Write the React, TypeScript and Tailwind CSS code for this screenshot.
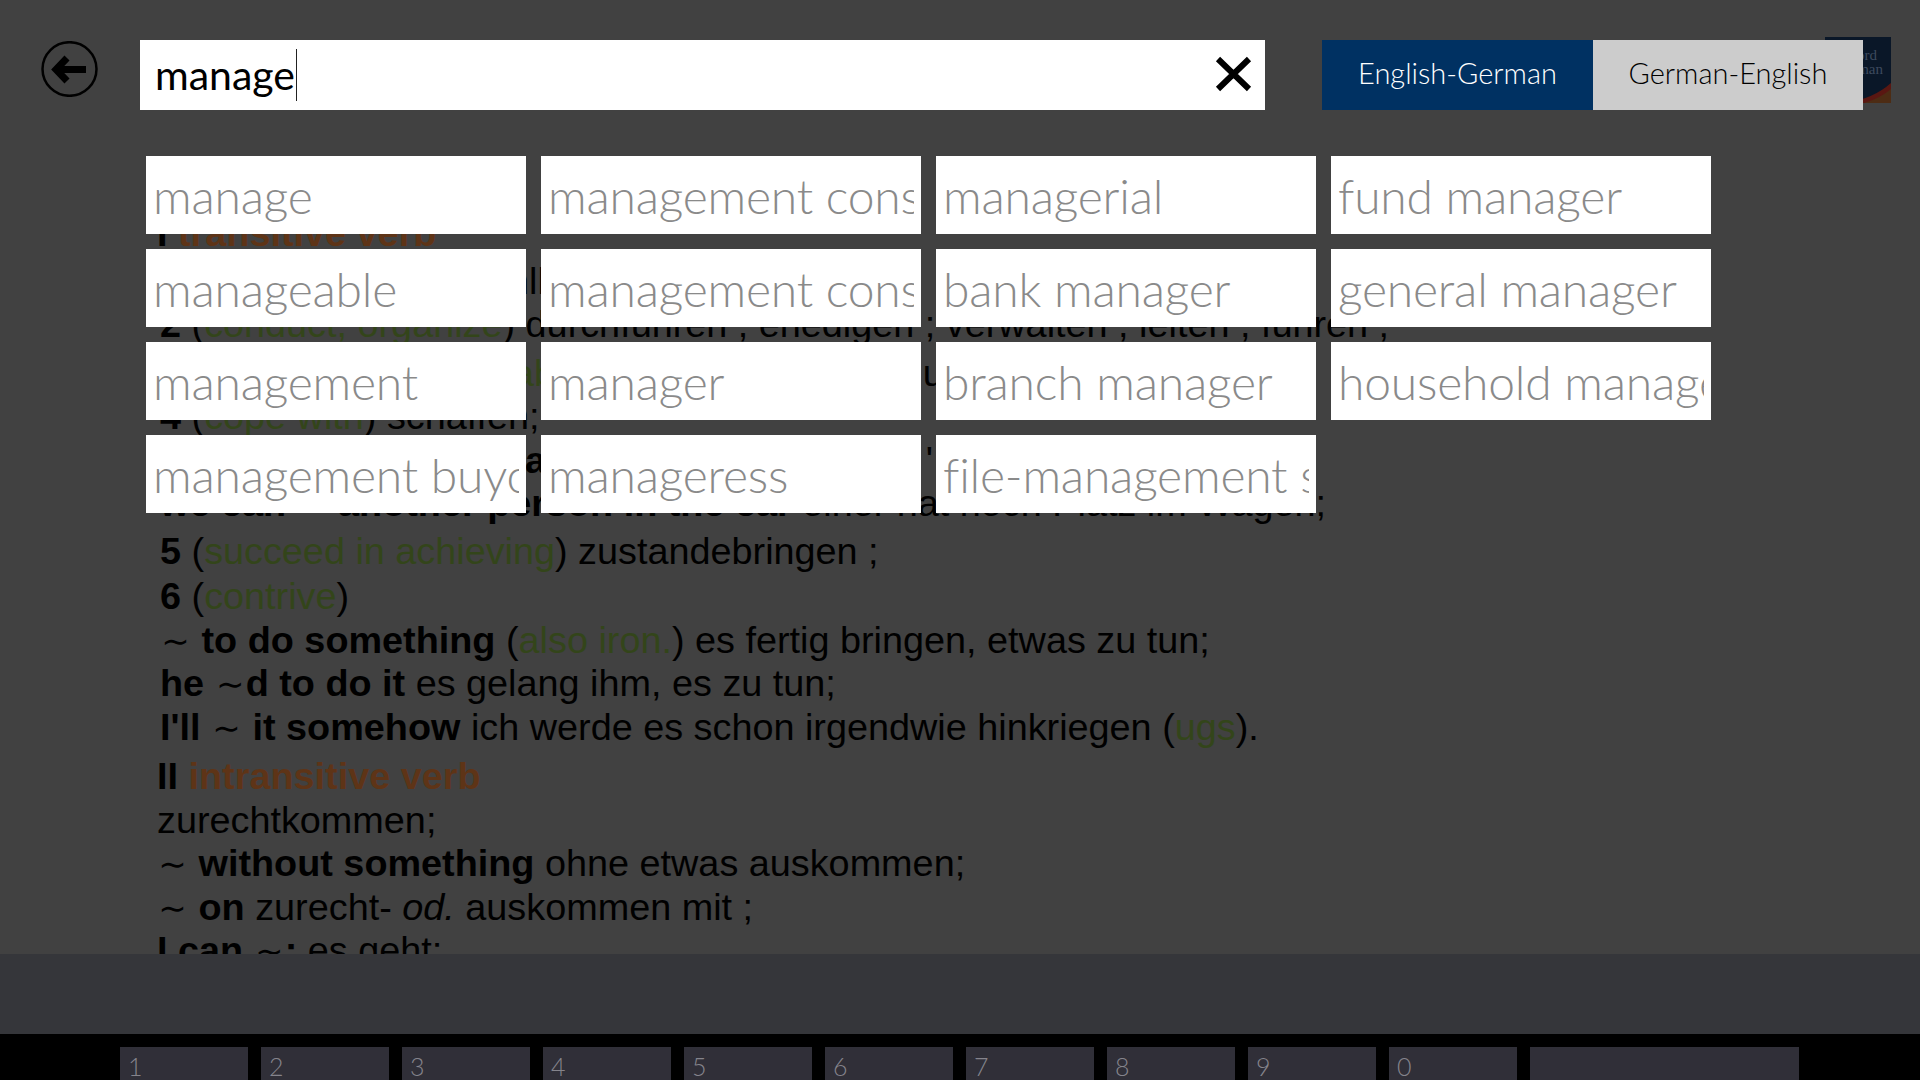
import React from "react";

const cells = [
  ["manage", "management consultant", "managerial", "fund manager"],
  ["manageable", "management consultancy", "bank manager", "general manager"],
  ["management", "manager", "branch manager", "household manager"],
  ["management buyout", "manageress", "file-management system"],
];
const keys = ["1", "2", "3", "4", "5", "6", "7", "8", "9", "0"];

const G = ({ children }: { children: React.ReactNode }) => <span className="text-[#33451a]">{children}</span>;
const B = ({ children }: { children: React.ReactNode }) => <b className="font-bold">{children}</b>;
const T = () => <span className="inline-block w-[31px] text-center font-['DejaVu_Sans',sans-serif] font-normal text-[34px] leading-none">∼</span>;

function Cell({ text }: { text: string }) {
  return (
    <div className="h-[78px] w-[380px] bg-white px-[7px] overflow-hidden">
      <div className="overflow-hidden whitespace-nowrap font-['Lato',sans-serif] font-light text-[48px] tracking-[-0.2px] [font-variant-ligatures:none] leading-[80px] text-[#8a8a8a]">
        {text}
      </div>
    </div>
  );
}

export default function App() {
  return (
    <div className="relative flex h-screen w-full flex-col overflow-hidden bg-[#414141]">
      <main className="h-[954px] overflow-hidden pl-[160px] pt-[212px] font-['Liberation_Sans',sans-serif] text-[37.8px] leading-[43.5px] text-black whitespace-nowrap">
        <div className="-ml-[3px] mb-[4px]"><B>I</B> <b className="font-bold text-[#5e3417]">transitive verb</b></div>
        <div>1 (<G>handle</G>) mit zu Wohlhaben;</div>
        <div><B>2</B> (<G>conduct, organize</G>) durchführen , erledigen ; verwalten , leiten , führen ;</div>
        <div className="mt-[5px]"><B>3</B> (<G>subject to manageable</G>) behaupten und an umgehen</div>
        <div><B>4</B> (<G>cope with</G>) schaffen;</div>
        <div><B>she thinks we can<T /> a</B> es nun noch schaffen '</div>
        <div><B>we can <T /> another person in the car</B> einer hat noch Platz im Wagen;</div>
        <div className="mt-[4px]"><B>5</B> (<G>succeed in achieving</G>) zustandebringen ;</div>
        <div className="mt-[2px]"><B>6</B> (<G>contrive</G>)</div>
        <div><T /> <B>to do something</B> (<G>also iron.</G>) es fertig bringen, etwas zu tun;</div>
        <div><B>he <T />d to do it</B> es gelang ihm, es zu tun;</div>
        <div><B>I'll <T /> it somehow</B> ich werde es schon irgendwie hinkriegen (<G>ugs</G>).</div>
        <div className="-ml-[3px] mt-[6px]"><B>II</B> <b className="font-bold text-[#5e3417]">intransitive verb</b></div>
        <div className="-ml-[3px]">zurechtkommen;</div>
        <div className="-ml-[3px]"><T /> <B>without something</B> ohne etwas auskommen;</div>
        <div className="-ml-[3px]"><T /> <B>on</B> zurecht- <i>od.</i> auskommen mit ;</div>
        <div className="-ml-[3px]"><B>I can <T />:</B> es geht;</div>
      </main>

      <div className="h-[80px] bg-[#35363a]" />

      <div className="flex h-[46px] gap-[13px] bg-black pl-[120px] pt-[13px]">
        {keys.map((k) => (
          <div key={k} className="h-[33px] w-[128px] overflow-hidden bg-[#302f38] pl-[8px] font-['Lato',sans-serif] text-[25px] font-light leading-[38px] text-[#85848c]">
            {k}
          </div>
        ))}
        <div className="h-[33px] w-[269px] bg-[#302f38]" />
      </div>

      <div className="absolute inset-x-0 top-0">
        <div className="relative flex pl-[41px] pt-[40px]">
          <svg className="mt-[1px] h-[56px] w-[57px] shrink-0" viewBox="0 0 57 56" fill="none">
            <ellipse cx="28.5" cy="28" rx="27" ry="26.8" stroke="#000" strokeWidth="2.5" />
            <path d="M17 28.5 H45" stroke="#000" strokeWidth="7" />
            <path d="M26 17 L15 28.5 L26 40" stroke="#000" strokeWidth="7" />
          </svg>
          <div className="relative ml-[42px] flex h-[70px] w-[1125px] items-center bg-white pl-[15px]">
            <span className="font-['Lato',sans-serif] text-[41px] font-normal leading-[70px] text-black">manage</span>
            <span className="ml-[1px] h-[52px] w-px bg-[#222]" />
            <svg className="absolute right-[13px] top-[16px] h-[36px] w-[37px]" viewBox="0 0 37 36" fill="none">
              <path d="M3 3 L34 33 M34 3 L3 33" stroke="#000" strokeWidth="6" />
            </svg>
          </div>
          <div className="relative z-10 ml-[57px] flex h-[70px] font-['Lato',sans-serif] text-[29px] font-light leading-[66px]">
            <div className="w-[271px] bg-[#003162] text-center text-white">English-German</div>
            <div className="w-[270px] bg-[#cccccc] text-center text-black">German-English</div>
          </div>
          <svg className="absolute left-[1825px] top-[37px] h-[66px] w-[66px]" viewBox="0 0 66 66">
            <rect width="66" height="66" fill="#0a1728" />
            <path d="M20 66 Q48 62 66 46 V66 Z" fill="#5a1712" />
            <path d="M20 70 Q50 66 66 52 V66 Z" fill="#4d2c14" />
            <text x="52" y="23" textAnchor="end" fontFamily="Liberation Serif" fontSize="15" fill="#3d4a5e">Oxford</text>
            <text x="58" y="37" textAnchor="end" fontFamily="Liberation Serif" fontSize="15" fill="#3d4a5e">German</text>
          </svg>
        </div>
        <div className="ml-[146px] mt-[46px] flex flex-col gap-[15px]">
          {cells.map((row, i) => (
            <div key={i} className="flex gap-[15px]">
              {row.map((c) => (
                <Cell key={c} text={c} />
              ))}
            </div>
          ))}
        </div>
      </div>
    </div>
  );
}
